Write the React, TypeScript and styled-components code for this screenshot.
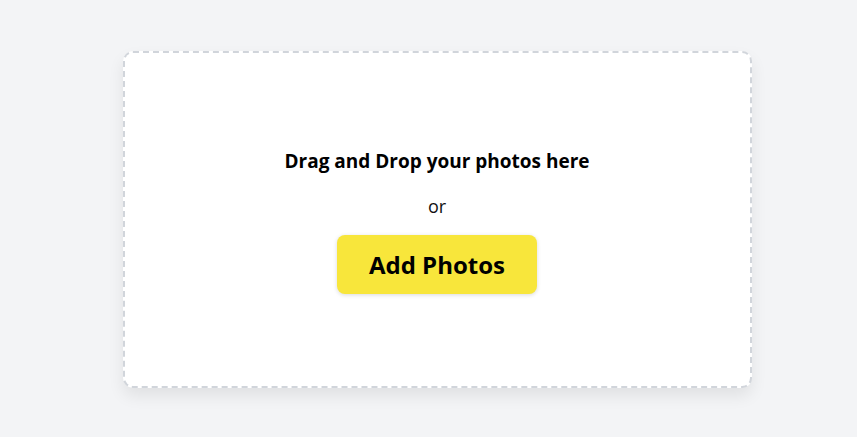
import React, { FC } from 'react'
import styled, { createGlobalStyle } from 'styled-components'

const GlobalStyle = createGlobalStyle`
  html, body {
    margin: 0;
    padding: 0;
    background: #f3f4f6;
    font-family: 'Open Sans', 'Noto Sans', sans-serif;
  }
`

const App: FC = () => {
  return (
    <Page>
      <GlobalStyle />
      <DropZone>
        <Title>Drag and Drop your photos here</Title>
        <Or>or</Or>
        <AddButton type='button'>Add Photos</AddButton>
      </DropZone>
    </Page>
  )
}

const Page = styled.div`
  min-height: 437px;
  box-sizing: border-box;
  padding: 51px 0 0 17px;
  display: flex;
  justify-content: center;
  align-items: flex-start;
`

const DropZone = styled.div`
  width: 629px;
  height: 337px;
  box-sizing: border-box;
  background: #fff;
  border: 2px dashed #d1d5db;
  border-radius: 10px;
  box-shadow: 0 8px 16px rgba(0, 0, 0, 0.08);
  display: flex;
  flex-direction: column;
  align-items: center;
  padding-top: 95px;
`

const Title = styled.div`
  font-size: 19px;
  font-weight: 700;
  color: #000;
  line-height: 26px;
`

const Or = styled.div`
  margin-top: 20px;
  font-size: 18px;
  color: #111;
  line-height: 24px;
`

const AddButton = styled.button`
  margin-top: 17px;
  width: 200px;
  height: 59px;
  border: none;
  border-radius: 8px;
  background: #f8e63b;
  box-shadow: 0 1px 4px rgba(0, 0, 0, 0.15);
  font-family: inherit;
  font-size: 24px;
  font-weight: 700;
  color: #000;
  cursor: pointer;
`

export default App
